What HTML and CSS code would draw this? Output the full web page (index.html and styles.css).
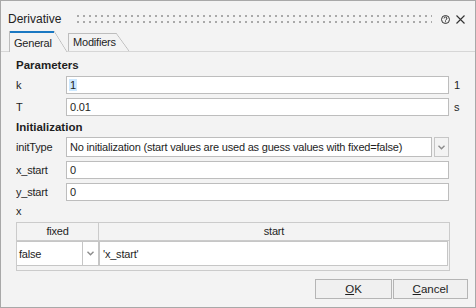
FILE: index.html
```html
<!DOCTYPE html>
<html lang="en">
<head>
    <meta charset="UTF-8">
    <title>Derivative</title>
    <link rel="stylesheet" href="styles.css">
</head>
<body>
    <div class="dialog">
        <div class="titlebar">
            <span class="title">Derivative</span>
            <span class="grip"></span>
            <svg class="help" width="9" height="9" viewBox="0 0 9 9">
                <circle cx="4.5" cy="4.5" r="4" fill="none" stroke="#333" stroke-width="1"/>
                <path d="M3.1 3.4 A1.4 1.4 0 1 1 4.9 4.7 Q4.5 4.9 4.5 5.6" fill="none" stroke="#333" stroke-width="1"/>
                <rect x="4" y="6.3" width="1" height="1" fill="#333"/>
            </svg>
            <svg class="close" width="9" height="9" viewBox="0 0 9 9">
                <path d="M0.5 0.5 L8.5 8.5 M8.5 0.5 L0.5 8.5" stroke="#333" stroke-width="1.1"/>
            </svg>
        </div>

        <div class="tabs">
            <div class="tab active">General</div>
            <div class="tab">Modifiers</div>
        </div>

        <div class="pane">
            <div class="section first">Parameters</div>
            <div class="row">
                <span class="label">k</span>
                <div class="field"><span class="selected">1</span></div>
                <span class="unit">1</span>
            </div>
            <div class="row">
                <span class="label">T</span>
                <div class="field">0.01</div>
                <span class="unit">s</span>
            </div>

            <div class="section">Initialization</div>
            <div class="row combo-row">
                <span class="label">initType</span>
                <div class="field">No initialization (start values are used as guess values with fixed=false)</div>
                <div class="drop">
                    <svg width="7" height="5" viewBox="0 0 7 5"><path d="M0.5 0.8 L3.5 3.8 L6.5 0.8" fill="none" stroke="#8c8c8c" stroke-width="1.4"/></svg>
                </div>
                <span class="unit"></span>
            </div>
            <div class="row">
                <span class="label">x_start</span>
                <div class="field">0</div>
                <span class="unit"></span>
            </div>
            <div class="row">
                <span class="label">y_start</span>
                <div class="field">0</div>
                <span class="unit"></span>
            </div>

            <div class="sublabel">x</div>
            <div class="grid">
                <div class="grid-head">
                    <div class="head-cell fixed-col">fixed</div>
                    <div class="head-cell">start</div>
                </div>
                <div class="grid-row">
                    <div class="cell-combo">
                        <span class="cell-text">false</span>
                        <span class="cell-drop">
                            <svg width="7" height="5" viewBox="0 0 7 5"><path d="M0.5 0.8 L3.5 3.8 L6.5 0.8" fill="none" stroke="#8c8c8c" stroke-width="1.4"/></svg>
                        </span>
                    </div>
                    <div class="cell-edit">'x_start'</div>
                </div>
            </div>
        </div>

        <div class="buttons">
            <button class="btn ok"><u>O</u>K</button>
            <button class="btn cancel"><u>C</u>ancel</button>
        </div>
    </div>
</body>
</html>
```

FILE: styles.css
```css
* {
    margin: 0;
    padding: 0;
    box-sizing: border-box;
}

body {
    font-family: "Liberation Sans", Arial, sans-serif;
    font-size: 11px;
    letter-spacing: -0.2px;
    color: #1e1e1e;
    background: #f3f3f3;
}

.dialog {
    width: 476px;
    height: 308px;
    border: 1px solid #a8a8a8;
    background: #f3f3f3;
    display: flex;
    flex-direction: column;
}

/* title bar */
.titlebar {
    height: 29px;
    padding: 7px 10px 0 7px;
    display: flex;
    align-items: center;
}

.title {
    font-size: 12px;
    letter-spacing: 0;
    color: #222;
}

.grip {
    flex: 1;
    height: 8px;
    margin: 0 9px 0 16px;
    background:
        linear-gradient(to right, #a9a9a9 2px, transparent 2px) 0 0 / 6px 2px repeat-x,
        linear-gradient(to right, #a9a9a9 2px, transparent 2px) 0 6px / 6px 2px repeat-x;
}

.close {
    margin-left: 6px;
}

/* tabs */
.tabs {
    height: 22px;
    padding-left: 8px;
    display: flex;
    align-items: flex-end;
    border-bottom: 1px solid #d6d6d6;
}

.tab {
    position: relative;
    width: 48px;
    height: 18px;
    line-height: 18px;
    padding-left: 4px;
    margin-right: 14px;
    border-left: 1px solid #bdbdbd;
    box-shadow: inset 0 1px 0 #bdbdbd;
    white-space: nowrap;
}

.tab::after {
    content: "";
    position: absolute;
    top: 0;
    bottom: 0;
    right: -13px;
    width: 13px;
    background: linear-gradient(to top right, transparent calc(50% - 0.7px), #bdbdbd 50%, transparent calc(50% + 0.7px));
}

.tab.active {
    width: 45px;
    height: 21px;
    line-height: 20px;
    padding-top: 2px;
    margin-bottom: -1px;
    background: #f3f3f3;
    box-shadow: inset 0 2px 0 #1a78c2;
}

.tab.active::after {
    background: linear-gradient(to top right, #f3f3f3 calc(50% - 0.7px), #bdbdbd 50%, transparent calc(50% + 0.7px));
}

/* content */
.pane {
    padding: 5px 0 0 15px;
}

.section {
    font-weight: bold;
    font-size: 11.5px;
    letter-spacing: 0;
    line-height: 16px;
    margin-top: 3px;
}

.section.first {
    margin-top: 0;
}

.row {
    display: flex;
    align-items: center;
    height: 18px;
    margin-top: 4px;
}

.section + .row {
    margin-top: 3px;
}

.combo-row {
    height: 20px;
    margin-top: 2px !important;
}

.label {
    width: 50px;
}

.field {
    flex: 1;
    height: 100%;
    border: 1px solid #bdbdbd;
    background: #fff;
    padding-left: 3px;
    display: flex;
    align-items: center;
    white-space: nowrap;
    overflow: hidden;
}

.selected {
    background: #cce8ff;
    padding: 0 1px;
    margin-left: -1px;
}

.drop {
    width: 15px;
    height: 100%;
    margin-left: 2px;
    border: 1px solid #c6c6c6;
    display: flex;
    align-items: center;
    justify-content: center;
}

.unit {
    width: 26px;
    padding-left: 5px;
}

.sublabel {
    line-height: 16px;
    margin-top: 2px;
}

/* table */
.grid {
    width: 434px;
    margin-top: 3px;
    border: 1px solid #cbcbcb;
    padding-bottom: 4px;
    background: #f3f3f3;
}

.grid-head {
    display: flex;
    height: 18px;
    border-bottom: 1px solid #cbcbcb;
}

.head-cell {
    flex: 1;
    text-align: center;
    line-height: 17px;
}

.head-cell.fixed-col {
    flex: none;
    width: 82px;
    border-right: 1px solid #cbcbcb;
}

.grid-row {
    display: flex;
    height: 25px;
    padding-right: 1px;
}

.cell-combo {
    width: 82px;
    display: flex;
    background: #fff;
    border: 1px solid #c6c6c6;
    border-left: none;
}

.cell-text {
    flex: 1;
    padding-left: 2px;
    display: flex;
    align-items: center;
}

.cell-drop {
    width: 16px;
    border-left: 1px solid #c6c6c6;
    display: flex;
    align-items: center;
    justify-content: center;
}

.cell-edit {
    flex: 1;
    background: #fff;
    border: 1px solid #c6c6c6;
    padding-left: 3px;
    display: flex;
    align-items: center;
}

/* buttons */
.buttons {
    display: flex;
    justify-content: flex-end;
    gap: 1px;
    padding: 8px 7px 0 0;
}

.btn {
    height: 20px;
    font-family: inherit;
    font-size: 11.5px;
    letter-spacing: 0;
    color: #1e1e1e;
    background: #f0f0f0;
    border: 1px solid #b5b5b5;
}

.btn.ok {
    width: 77px;
}

.btn.cancel {
    width: 75px;
}
```
